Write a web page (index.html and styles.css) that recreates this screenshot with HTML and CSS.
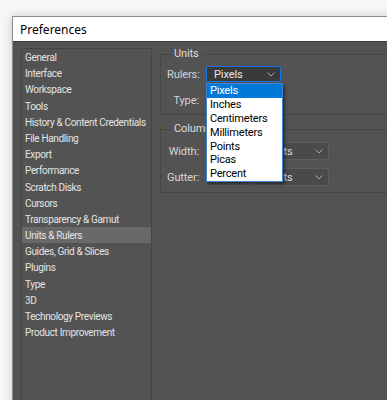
FILE: index.html
```html
<!DOCTYPE html>
<html lang="en">
<head>
  <meta charset="UTF-8" />
  <title>Preferences</title>
  <link rel="stylesheet" href="styles.css">
</head>
<body>
  <div class="window">
    <div class="titlebar">Preferences</div>

    <div class="content">
      <ul class="nav">
        <li>General</li>
        <li>Interface</li>
        <li>Workspace</li>
        <li>Tools</li>
        <li>History &amp; Content Credentials</li>
        <li>File Handling</li>
        <li>Export</li>
        <li>Performance</li>
        <li>Scratch Disks</li>
        <li>Cursors</li>
        <li>Transparency &amp; Gamut</li>
        <li class="active">Units &amp; Rulers</li>
        <li>Guides, Grid &amp; Slices</li>
        <li>Plugins</li>
        <li>Type</li>
        <li>3D</li>
        <li>Technology Previews</li>
        <li>Product Improvement</li>
      </ul>

      <div class="panel">
        <fieldset class="group">
          <legend>Units</legend>
          <div class="row">
            <label>Rulers:</label>
            <div class="select-wrap">
              <div class="select open">
                <span>Pixels</span>
                <svg class="chev" viewBox="0 0 8 5"><polyline points="0.5,0.5 4,4 7.5,0.5"/></svg>
              </div>
              <ul class="dropdown">
                <li class="hover">Pixels</li>
                <li>Inches</li>
                <li>Centimeters</li>
                <li>Millimeters</li>
                <li>Points</li>
                <li>Picas</li>
                <li>Percent</li>
              </ul>
            </div>
          </div>
          <div class="row">
            <label>Type:</label>
            <div class="select">
              <span>Points</span>
              <svg class="chev" viewBox="0 0 8 5"><polyline points="0.5,0.5 4,4 7.5,0.5"/></svg>
            </div>
          </div>
        </fieldset>

        <fieldset class="group cols">
          <legend>Column Size</legend>
          <div class="row tall">
            <label>Width:</label>
            <div class="num">180</div>
            <div class="select">
              <span>Points</span>
              <svg class="chev" viewBox="0 0 8 5"><polyline points="0.5,0.5 4,4 7.5,0.5"/></svg>
            </div>
          </div>
          <div class="row tall">
            <label>Gutter:</label>
            <div class="num">12</div>
            <div class="select">
              <span>Points</span>
              <svg class="chev" viewBox="0 0 8 5"><polyline points="0.5,0.5 4,4 7.5,0.5"/></svg>
            </div>
          </div>
        </fieldset>
      </div>
    </div>
  </div>
</body>
</html>
```

FILE: styles.css
```css
* { box-sizing: border-box; margin: 0; padding: 0; }

body {
  font-family: Roboto, 'Noto Sans', sans-serif;
  background: #f7f7f7;
  overflow: hidden;
  height: 400px;
}

.window {
  margin: 16px 0 0 12px;
  width: 440px;
  height: 420px;
  background: #535353;
  border-top: 1px solid #8c8c8c;
  border-left: 1px solid #8c8c8c;
  box-shadow: 0 0 10px rgba(0,0,0,0.18);
}

.titlebar {
  height: 25px;
  background: #fff;
  color: #000;
  font-family: 'Noto Sans', sans-serif;
  font-size: 12px;
  line-height: 25px;
  padding-left: 7px;
  border-bottom: 1px solid #3d3d3d;
}

.content {
  display: flex;
  padding: 6px 0 0 8px;
}

/* left category list */
.nav {
  list-style: none;
  width: 131px;
  height: 380px;
  border: 1px solid #454545;
  color: #e4e4e4;
  font-size: 10px;
  letter-spacing: -0.35px;
}

.nav li {
  height: 16.2px;
  line-height: 18px;
  padding-left: 3px;
  white-space: nowrap;
}

.nav li.active {
  background: #696969;
}

/* right panel */
.panel {
  flex: 1;
  margin-left: 8px;
  margin-top: -1px;
}

.group {
  border: 1px solid #464646;
  border-right: none;
  padding: 5px 0 6px 6px;
  color: #d6d6d6;
  font-size: 11px;
  letter-spacing: -0.1px;
}

.group legend {
  margin-left: 4px;
  padding: 0 3px;
  line-height: 14px;
  color: #dedede;
}

.group.cols {
  margin-top: 7px;
  padding-top: 6px;
}

.row {
  display: flex;
  align-items: center;
  gap: 7px;
  height: 16px;
}

.row + .row {
  margin-top: 10px;
}

.row.tall {
  height: 18px;
}

.row.tall + .row.tall {
  margin-top: 8px;
}

.row label {
  width: 32px;
  text-align: right;
  white-space: nowrap;
}

.select-wrap {
  position: relative;
}

.select {
  width: 75px;
  height: 100%;
  display: flex;
  align-items: center;
  justify-content: space-between;
  padding: 0 5px 0 7px;
  background: #4a4a4a;
  border: 1px solid #5e5e5e;
  border-radius: 3px;
  color: #dcdcdc;
}

.row .select-wrap .select {
  height: 16px;
}

.select.open {
  background: #3a3a3a;
  border-color: #1473e6;
  border-radius: 2px;
  color: #e8e8e8;
}

.chev {
  width: 8px;
  height: 5px;
  fill: none;
  stroke: #a8a8a8;
  stroke-width: 1;
}

.num {
  width: 43px;
  height: 100%;
  background: #4a4a4a;
  border: 1px solid #5e5e5e;
  border-radius: 3px;
  color: #dcdcdc;
  padding-left: 5px;
  line-height: 16px;
  margin-right: -2px;
}

/* open dropdown list */
.dropdown {
  position: absolute;
  top: 17px;
  left: 0;
  width: 77px;
  list-style: none;
  background: #fff;
  border: 1px solid #3d84d4;
  box-shadow: 2px 2px 3px rgba(0,0,0,0.45);
  color: #000;
  font-size: 11px;
  letter-spacing: -0.2px;
  z-index: 5;
}

.dropdown li {
  height: 13.9px;
  line-height: 13.9px;
  padding-left: 3px;
}

.dropdown li.hover {
  background: #0078d7;
  color: #fff;
}
```
